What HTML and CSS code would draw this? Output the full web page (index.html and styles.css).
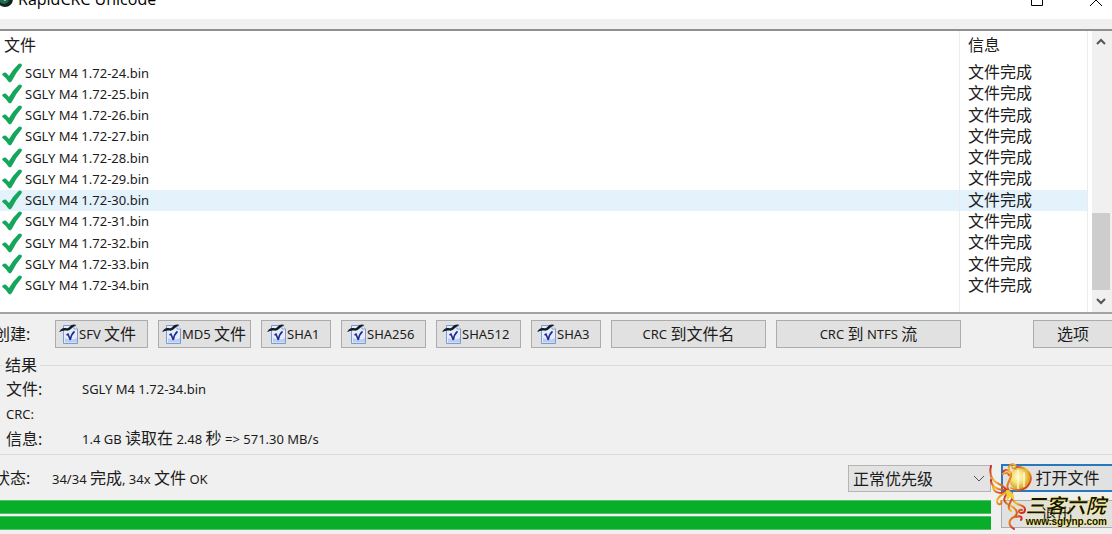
FILE: index.html
```html
<!DOCTYPE html>
<html lang="zh-CN">
<head>
<meta charset="utf-8">
<title>RapidCRC Unicode</title>
<link rel="stylesheet" href="styles.css">
</head>
<body>
<svg class="defs" aria-hidden="true">
  <symbol id="check" viewBox="0 0 20 20"><path d="M.4 10.800Q2.500 9 4 9.800L7 13Q11 6 16.500 .900Q18.300-.2 19.600 1.300Q20.300 2.400 19.400 3.500Q14 9.500 9.800 18Q8.300 20.500 6.300 18.600Q4 14.700 .6 12.300Q-.1 11.500 .4 10.800Z" fill="#14a65b"/></symbol>
  <symbol id="doc" viewBox="0 0 20 20">
    <path d="M4.500 1.500H15L18.500 5V19.500H4.500Z" fill="#e3edfc" stroke="#7c9bd3"/>
    <path d="M15 1.500V5H18.500" fill="#fff" stroke="#7c9bd3"/>
    <path d="M6 18.500H18V14Q12 17 6 14Z" fill="#b9cdf3"/>
    <path d="M0 8Q3 3 6.500 4.100Q9 4.700 10.500 2.700Q13 -.2 17.500 .9Q14 2.500 12.500 4.600Q10.300 7.300 7.300 6.600Q4 5.900 0 8Z" fill="#151c20"/>
    <path d="M7.500 11L9 10.200L11.300 16Q12 10.500 15.500 7.300" fill="none" stroke="#252a91" stroke-width="1.600"/>
  </symbol>
</svg>
<header class="titlebar">
  <svg class="app-icon" viewBox="0 0 16 16"><circle cx="5" cy="8" r="8" fill="#12241d"/><circle cx="4" cy="8" r="5" fill="#1e6b4c"/><path d="M2 7L5 10L7 6" stroke="#9fc7b2" fill="none"/></svg>
  <h1 class="title">RapidCRC Unicode</h1>
  <button class="window-button" aria-label="最大化"><svg viewBox="0 0 12 12"><path d="M.5.500H11.500V11.500H.5Z"/></svg></button>
  <button class="window-button" aria-label="关闭"><svg viewBox="0 0 12 12"><path d="M0 0L12 12M12 0L0 12"/></svg></button>
</header>
<main>
  <section class="list">
    <table class="files">
      <thead><tr><th class="name">文件</th><th class="info">信息</th></tr></thead>
      <tbody>
        <tr><td><span class="file"><svg><use href="#check"/></svg>SGLY M4 1.72-24.bin</span></td><td class="info">文件完成</td></tr>
        <tr><td><span class="file"><svg><use href="#check"/></svg>SGLY M4 1.72-25.bin</span></td><td class="info">文件完成</td></tr>
        <tr><td><span class="file"><svg><use href="#check"/></svg>SGLY M4 1.72-26.bin</span></td><td class="info">文件完成</td></tr>
        <tr><td><span class="file"><svg><use href="#check"/></svg>SGLY M4 1.72-27.bin</span></td><td class="info">文件完成</td></tr>
        <tr><td><span class="file"><svg><use href="#check"/></svg>SGLY M4 1.72-28.bin</span></td><td class="info">文件完成</td></tr>
        <tr><td><span class="file"><svg><use href="#check"/></svg>SGLY M4 1.72-29.bin</span></td><td class="info">文件完成</td></tr>
        <tr class="hot"><td><span class="file"><svg><use href="#check"/></svg>SGLY M4 1.72-30.bin</span></td><td class="info">文件完成</td></tr>
        <tr><td><span class="file"><svg><use href="#check"/></svg>SGLY M4 1.72-31.bin</span></td><td class="info">文件完成</td></tr>
        <tr><td><span class="file"><svg><use href="#check"/></svg>SGLY M4 1.72-32.bin</span></td><td class="info">文件完成</td></tr>
        <tr><td><span class="file"><svg><use href="#check"/></svg>SGLY M4 1.72-33.bin</span></td><td class="info">文件完成</td></tr>
        <tr><td><span class="file"><svg><use href="#check"/></svg>SGLY M4 1.72-34.bin</span></td><td class="info">文件完成</td></tr>
      </tbody>
      <tfoot><tr class="tail"><td></td><td class="info"></td></tr></tfoot>
    </table>
    <div class="scrollbar">
      <button class="arrow" aria-label="向上滚动"><svg viewBox="0 0 10 8"><path d="M1 6L5 2L9 6"/></svg></button>
      <div class="track"><div class="thumb"></div></div>
      <button class="arrow" aria-label="向下滚动"><svg viewBox="0 0 10 8"><path d="M1 2L5 6L9 2"/></svg></button>
    </div>
  </section>

  <section class="toolbar">
    <span class="cut-label zh">创建:</span>
    <button class="btn hash sfv"><svg><use href="#doc"/></svg>SFV&nbsp;<span class="zh">文件</span></button>
    <button class="btn hash sfv"><svg><use href="#doc"/></svg>MD5&nbsp;<span class="zh">文件</span></button>
    <button class="btn hash short"><svg><use href="#doc"/></svg>SHA1</button>
    <button class="btn hash medium"><svg><use href="#doc"/></svg>SHA256</button>
    <button class="btn hash medium"><svg><use href="#doc"/></svg>SHA512</button>
    <button class="btn hash short"><svg><use href="#doc"/></svg>SHA3</button>
    <button class="btn to-name">CRC&nbsp;<span class="zh">到文件名</span></button>
    <button class="btn to-stream">CRC&nbsp;<span class="zh">到</span>&nbsp;NTFS&nbsp;<span class="zh">流</span></button>
    <button class="btn options"><span class="zh">选项</span></button>
  </section>

  <fieldset class="results">
    <legend class="zh">结果</legend>
    <dl>
      <dt class="zh">文件:</dt><dd>SGLY M4 1.72-34.bin</dd>
      <dt>CRC:</dt><dd></dd>
      <dt class="zh">信息:</dt><dd>1.4 GB <span class="zh">读取在</span> 2.48 <span class="zh">秒</span> =&gt; 571.30 MB/s</dd>
    </dl>
  </fieldset>

  <section class="bottom">
    <div class="status">
      <label class="cut-label zh" for="priority">状态:</label>
      <output class="status-text">34/34 <span class="zh">完成</span>, 34x <span class="zh">文件</span> OK</output>
      <div class="select-wrap">
        <select id="priority"><option>正常优先级</option></select>
        <svg class="chevron" viewBox="0 0 12 8"><path d="M1 1L6 6L11 1"/></svg>
      </div>
    </div>
    <button class="btn open"><span class="zh">打开文件</span></button>
    <div class="bars">
      <progress value="100" max="100" aria-label="文件进度"></progress>
      <progress value="100" max="100" aria-label="总进度"></progress>
    </div>
    <button class="btn exit"><span class="zh">退出</span></button>
    <div class="watermark">
      <svg class="phoenix" viewBox="0 0 48 68">
        <defs>
          <radialGradient id="gold" cx=".4" cy=".4"><stop offset="0" stop-color="#fffbd0"/><stop offset=".55" stop-color="#f6e27a"/><stop offset="1" stop-color="#dcae30"/></radialGradient>
          <linearGradient id="flame" x2=".8" y2="1"><stop stop-color="#c9202a"/><stop offset=".45" stop-color="#f3bd27"/><stop offset="1" stop-color="#cf2a1c"/></linearGradient>
        </defs>
        <circle cx="31" cy="16" r="11" fill="url(#gold)"/>
        <path d="M29 7V26M35 9V24" stroke="#fffbe0" stroke-width="2" opacity=".7"/>
        <g fill="none" stroke="url(#flame)" stroke-width="2" stroke-linecap="round">
          <path d="M2 3C0 12 3 18 10 21C15 23 17 26 19 29"/>
          <path d="M2 17C2 23 8 27 16 27M4 24C5 31 13 30 17 30"/>
          <path d="M14 9C17 5 23 8 22 13C20 20 16 22 20 28"/>
          <path d="M14 11C17 9 19 10 20 12M20 6C19 2 23 0 26 2C30 5 24 7 23 4"/>
          <path d="M28 4C39 4 45 13 40 21C36 28 27 28 22 25"/>
          <path d="M20 28C13 31 8 34 8 39C9 43 14 41 12 38"/>
          <path d="M18 31C12 37 17 41 22 43C28 46 30 51 25 54C19 57 19 62 25 66"/>
          <path d="M23 30C22 37 25 40 31 42C38 44 37 50 32 50C28 49 30 46 33 47"/>
          <path d="M23 36C20 42 18 45 22 48M27 54C31 52 34 54 32 57"/>
        </g>
        <path d="M17 27C23 28 26 31 25 37L21 34L18 38Z" fill="#f3cf35"/>
      </svg>
      <div class="mark-text"><span class="mark-name">三客六院</span><span class="mark-url">www.sglynp.com</span></div>
    </div>
  </section>
</main>
</body>
</html>
```
FILE: styles.css
```css
* { box-sizing: border-box; }
body {
  margin: 0;
  background: #f0f0f0;
  color: #1c1c1c;
  font: 13px/20px "Noto Sans", "Noto Sans CJK SC", sans-serif;
  overflow: hidden;
}
button { font: inherit; color: inherit; padding: 0; }
.defs { position: absolute; width: 0; height: 0; }
.zh { font-size: 16px; }

.titlebar {
  display: flex;
  align-items: flex-end;
  height: 19px;
  padding: 0 10px 12px 0;
  background: #fff;
}
.app-icon { width: 16px; height: 16px; flex: none; }
.title { flex: 1; margin: 0 0 0 2px; font: 400 16px/16px "Open Sans", sans-serif; color: #000; }
.window-button { width: 12px; height: 14px; margin-left: 47px; border: 0; background: none; }
.window-button svg { display: block; width: 12px; height: 12px; fill: none; stroke: #000; overflow: visible; }

.list {
  display: flex;
  margin-top: 10px;
  background: #fff;
  border-top: 2px solid #909090;
  border-bottom: 2px solid #a3a3a3;
}
.files { flex: 1; height: 281px; border-collapse: collapse; table-layout: fixed; }
.files th, .files td { padding: 0; text-align: left; font-weight: 400; line-height: 20px; }
.files th { height: 31px; padding: 0 4px 4px; font-size: 16px; }
.files .info { width: 128px; padding-left: 8px; border-left: 1px solid #ececec; border-right: 1px solid #ececec; font-size: 16px; }
.files td.info { padding-bottom: 1px; }
.hot { background: #e4f2fc; }
.files .tail td { height: 16px; }
.file { display: flex; align-items: center; gap: 3px; padding-left: 2px; }
.file svg { width: 20px; height: 20px; }
.scrollbar { display: flex; flex-direction: column; width: 20px; margin-left: 4px; background: #f0f0f0; }
.arrow { height: 22px; border: 0; background: none; }
.arrow svg { display: block; width: 10px; height: 8px; margin-left: 4px; fill: none; stroke: #555; stroke-width: 2; }
.track { flex: 1; display: flex; align-items: flex-end; }
.thumb { width: 18px; height: 77px; background: #cdcdcd; }

.toolbar { display: flex; align-items: center; gap: 10px; padding-top: 6px; }
.cut-label { flex: none; width: 51px; margin-left: -6px; }
.btn {
  display: flex;
  align-items: center;
  justify-content: center;
  height: 28px;
  border: 1px solid #acacac;
  background: #e1e1e1;
  white-space: nowrap;
}
.btn svg { width: 20px; height: 20px; }
.hash { justify-content: flex-start; padding-left: 5px; }
.sfv { width: 93px; padding-left: 3px; }
.short { width: 70px; }
.medium { width: 85px; }
.to-name { width: 155px; }
.to-stream { width: 185px; }
.options { width: 79px; margin-left: auto; border-right: 0; }

.results { margin: 7px 0 0; padding: 1px 0 3px 3px; border: 0 solid #dcdcdc; border-width: 1px 0; }
.results legend { padding: 0 3px 0 2px; line-height: 20px; }
dl { display: grid; grid-template-columns: 76px 1fr; grid-auto-rows: 25px; align-items: center; margin: 0 0 0 3px; }
dd { margin: 0; }

.bottom {
  position: relative;
  display: grid;
  grid-template-columns: 1fr 111px;
  gap: 8px 10px;
  padding-top: 9px;
}
.status { display: flex; align-items: center; }
.status-text { flex: 1; margin-left: 7px; }
.select-wrap { position: relative; width: 143px; }
select {
  appearance: none;
  display: block;
  width: 100%;
  height: 27px;
  padding: 0 4px;
  border: 1px solid #b4b4b4;
  border-radius: 0;
  background: #e3e3e3;
  color: inherit;
  font: 16px/20px "Noto Sans CJK SC", sans-serif;
}
.chevron { position: absolute; right: 6px; top: 10px; width: 12px; height: 8px; fill: none; stroke: #555; stroke-width: 1; }
.open { border: 2px solid #2878bd; border-right: 0; padding-left: 20px; }
.exit { border-right: 0; }
.bars { display: flex; flex-direction: column; gap: 2px; }
progress { appearance: none; display: block; width: 100%; height: 14px; border: 0; }
progress::-webkit-progress-bar { background: #e6e6e6; }
progress::-webkit-progress-value { background: #08ad29; border: 1px solid #55bd6b; border-width: 1px 0; }

.watermark { position: absolute; right: 5px; top: 8px; display: flex; align-items: flex-end; pointer-events: none; }
.phoenix { width: 48px; height: 68px; margin-right: -11px; }
.mark-text { display: flex; flex-direction: column; margin-bottom: 3px; color: #111; text-shadow: 0 0 2px #fff266, 0 0 2px #fff266; }
.mark-name { font: italic 500 20px/22px "Noto Sans CJK SC", sans-serif; }
.mark-url { font: 700 10px/12px "Liberation Sans", sans-serif; }
```
